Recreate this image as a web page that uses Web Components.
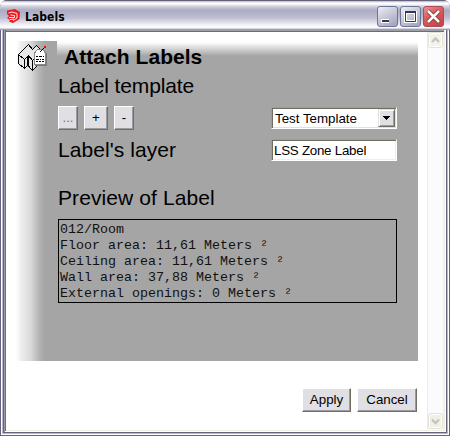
<!DOCTYPE html>
<html lang="en"><head><meta charset="utf-8"><title>Labels</title>
<style>html,body{margin:0;background:#fff}body{width:450px;height:436px;overflow:hidden;font-family:"Liberation Sans",Arial,sans-serif;color:#000}</style></head>
<body>
<label-window></label-window>
<script>
const define=(name,html)=>customElements.define(name,class extends HTMLElement{
  constructor(){super();const t=document.createElement('template');t.innerHTML=html;this.attachShadow({mode:'open'}).append(t.content.cloneNode(true));}
});

define('push-button',`<style>
:host{display:flex;box-sizing:border-box;height:24px;align-items:center;justify-content:center;background:#e0dfe3;border:1px solid;border-color:#fff #716f64 #716f64 #fff;box-shadow:inset -1px -1px #9d9da1;font-size:13.33px;line-height:15px;padding-bottom:1px;white-space:pre}
</style><slot></slot>`);

define('section-title',`<style>:host{display:block;font-size:21px;line-height:24px;letter-spacing:var(--track,-.12px);white-space:nowrap}</style><slot></slot>`);

define('text-field',`<style>
:host{display:flex;box-sizing:border-box;width:126px;height:22px;background:#fff;border:1px solid;border-color:#9d9da1 #fff #fff #9d9da1;box-shadow:inset 1px 1px #716f64,inset -1px -1px #f1efe2;font-size:13.33px;letter-spacing:-.25px;line-height:22px;padding-left:2px;white-space:nowrap}
</style><slot></slot>`);

define('drop-down',`<style>
:host{display:flex;box-sizing:border-box;width:126px;height:22px;background:#fff;border:1px solid;border-color:#9d9da1 #fff #fff #9d9da1;box-shadow:inset 1px 1px #716f64,inset -1px -1px #e0dfe3;font-size:13.33px;line-height:20px;padding:1px 1px 1px 3px;justify-content:space-between}
span{white-space:nowrap}
i{box-sizing:border-box;width:17px;height:18px;background:#e0dfe3;border:1px solid;border-color:#e0dfe3 #716f64 #716f64 #e0dfe3;box-shadow:inset 1px 1px #fff,inset -1px -1px #9d9da1;display:flex;align-items:center;justify-content:center}
</style><span><slot></slot></span><i><svg width="7" height="4" shape-rendering="crispEdges"><path d="M0 0H7V1H6V2H5V3H4V4H3V3H2V2H1V1H0Z"/></svg></i>`);

define('title-button',`<style>
:host{display:block;width:21px;height:21px}svg{display:block}
.min,.max,.close{display:none}
:host([kind=min]) .min,:host([kind=max]) .max,:host([kind=close]) .close{display:block}
</style><svg width="21" height="21" viewBox="0 0 21 21"><defs>
<linearGradient id="g" x2=".6" y2="1"><stop stop-color="#f0f0f7"/><stop offset=".5" stop-color="#ccccdc"/><stop offset="1" stop-color="#a9a9c3"/></linearGradient>
<linearGradient id="r" x2=".6" y2="1"><stop stop-color="#e99a9a"/><stop offset=".45" stop-color="#d9605f"/><stop offset="1" stop-color="#ca4549"/></linearGradient></defs>
<g class="min"><rect x=".5" y=".5" width="20" height="20" rx="2.5" fill="url(#g)" stroke="#6d7798"/><path d="M4 13h8v4H4z" fill="#fff"/><path d="M5 14h7v2H5z" fill="#39364f"/></g>
<g class="max"><rect x=".5" y=".5" width="20" height="20" rx="2.5" fill="url(#g)" stroke="#6d7798"/><rect x="5.5" y="6.5" width="10" height="9" fill="none" stroke="#fff" stroke-width="3"/><path d="M5 6.5h11M5.5 6v9.5h10V6M5 5.5h11" fill="none" stroke="#39364f"/></g>
<g class="close"><rect x=".5" y=".5" width="20" height="20" rx="2.5" fill="url(#r)" stroke="#a94c61"/><path d="M5 5l11 11M16 5L5 16" stroke="#772c35" stroke-width="4"/><path d="M5 5l11 11M16 5L5 16" stroke="#fff" stroke-width="2.6"/></g></svg>`);

define('title-bar',`<style>
:host{display:flex;box-sizing:border-box;height:30px;padding:6px 6px 0 7px;background:linear-gradient(#65637e 0 1px,#b4b4ca 1px,#fff 3px,#fff 4px,#d5d5e1 6px,#adadc5 10px,#afafc6 12px,#c0c0d2 18px,#e4e4ed 23px,#fff 27px,#f5f5fa 28px,#b5b5ca 29px,#8c8ba3 30px)}
.logo{margin-top:3px;flex:none}b{font:bold 12px/23px "DejaVu Sans Condensed","DejaVu Sans",sans-serif;margin-left:5px;flex:1;letter-spacing:.05px}
nav{display:flex;gap:2px}
</style><svg class="logo" width="13" height="15" viewBox="0 0 13 15"><path d="M0 1.5L8 0L13 3L12.5 10L6 14L2 12.5L3 11L0 9L2 7L0 5Z" fill="#ea1c20"/><path d="M1.5 4L5 3L10 4.5V9L6 11.5M3.5 6L7.5 6.5V8.5L2 8.5M3 10.5L7 10" fill="none" stroke="#fff" stroke-width=".9"/></svg><b>Labels</b>
<nav><title-button kind="min"></title-button><title-button kind="max"></title-button><title-button kind="close"></title-button></nav>`);

define('scroll-bar',`<style>
:host{display:flex;box-sizing:border-box;flex-direction:column;justify-content:space-between;width:17px;background:#fbfbfd;border-left:1px solid #eeede5;border-right:1px solid #f3efe1}
svg{display:block}
</style>
<svg width="15" height="17"><rect x=".5" y=".5" width="14" height="15" rx="2" fill="#f3f2ed" stroke="#e4e2d4"/><rect x="1.5" y="1.5" width="12" height="13" rx="1" fill="none" stroke="#fff"/><path d="M4 10l3.5-3.5L11 10" fill="none" stroke="#c5c6bb" stroke-width="2.4"/></svg>
<svg width="15" height="17"><rect x=".5" y=".5" width="14" height="15" rx="2" fill="#f0efea" stroke="#e4e2d4"/><rect x="1.5" y="1.5" width="12" height="13" rx="1" fill="none" stroke="#fff"/><path d="M4 6.5L7.5 10L11 6.5" fill="none" stroke="#c5c6bb" stroke-width="2.4"/></svg>`);

define('label-icon',`<style>:host{display:block;width:31px;height:31px}svg{display:block}</style>
<svg width="31" height="31" viewBox="0 0 31 31" shape-rendering="crispEdges"><path d="M1.5 13.5L11.5 3.5L15.5 8.5L19.5 4.5L24.5 9.5V22.5L20 25L15.5 29.5L10.5 24.5L7.5 27.5L1.5 22.5Z" fill="#e8e8e8"/>
<path d="M1.5 13.5L11.5 3.5L15.5 8.5L19.5 4.5L23.5 8.5M1.5 13V22.5L7.5 27.5V18.5L1.5 13.5M7.5 18.5L11.5 14.5L15.5 19.5L19.5 15.5M7.5 27.5L10.5 24.5V15.5M11.5 15V25L15.5 29.5V19.5M15.5 29.5L19.5 25.5" fill="none" stroke="#000"/>
<path d="M18 13L21 9H27L30 13V25H18Z" fill="#777"/><path d="M17.5 12L20.5 8.5H25.5L28.5 12V23.5H17.5Z" fill="#fff" stroke="#888"/>
<path d="M19 15.5h2m1 0h3m1 0h1M19 18.5h3m1 0h1m1 0h2M19 20.5h2m1 0h2m1 0h2M22.5 11.5L27.5 6.5" stroke="#000" fill="none"/><path d="M27 5h2v2h-2z" fill="red"/></svg>`);

define('label-preview',`<style>:host{display:block;box-sizing:border-box;width:339px;height:84px;border:1px solid #000;padding:2px 1px}pre{margin:0;font:13.33px/16px "Liberation Mono","Courier New",monospace;color:#111}</style><pre><slot></slot></pre>`);

define('label-panel',`<style>
:host{display:grid;grid-template-columns:41px 1fr;box-sizing:border-box;width:402px;height:320px;background:linear-gradient(90deg,#fff,#eee 5px,#d8d8d8 15px,#b4b4b4 23px,#a5a5a5 29px)}
.side{padding:0 0 0 1px}
main{padding:3px 21px 0 1px;background:linear-gradient(#fff,#fafafa 2px,#a5a5a5 15px)}
h1{font-size:21px;line-height:25px;margin:0 0 0 6px;letter-spacing:.05px;white-space:nowrap}
.row{display:flex;justify-content:space-between;align-items:flex-start}
.buttons{display:flex;gap:6px}.b{width:20px}.p{width:24px}
</style>
<div class="side"><label-icon></label-icon></div>
<main><h1>Attach Labels</h1><section-title style="margin-top:5px">Label template</section-title>
<div class="row" style="margin-top:8px"><div class="buttons"><push-button class="b" style="color:#777">...</push-button><push-button class="p">+</push-button><push-button class="b">-</push-button></div><drop-down style="margin-top:1px">Test Template</drop-down></div>
<div class="row" style="margin-top:8px"><section-title style="--track:.06px">Label's layer</section-title><text-field style="margin-top:1px">LSS Zone Label</text-field></div>
<section-title style="margin-top:24px;--track:.1px">Preview of Label</section-title>
<label-preview style="margin-top:9px">012/Room
Floor area: 11,61 Meters ²
Ceiling area: 11,61 Meters ²
Wall area: 37,88 Meters ²
External openings: 0 Meters ²</label-preview></main>`);

define('label-window',`<style>
:host{display:grid;grid-template-rows:30px 1fr;box-sizing:border-box;width:450px;height:436px;border-radius:7px 7px 0 0;overflow:hidden;background:#65637e}
.frame{padding:0 6px 6px;background:#fff;border:0;box-shadow:inset 1px 0 #65637e,inset -1px 0 #65637e,inset 0 -1px #65637e,inset 2px 0 #fff,inset -2px 0 #fff,inset 0 -2px #fff,inset 3px 0 #b9b8ce,inset -3px 0 #b9b8ce,inset 0 -3px #b9b8ce,inset 4px 0 #65637e,inset -4px 0 #65637e,inset 0 -4px #65637e,inset 5px 0 #9d9da1,inset -5px 0 #fff,inset 0 -5px #fff,inset 6px 0 #716f64,inset -6px 0 #f1efe2,inset 0 -6px #f1efe2,inset 0 1px #9d9da1,inset 0 2px #716f64}
.view{display:flex;height:398px;margin-top:2px;justify-content:space-between}
.page{padding:9px 0 0 10px}
.actions{display:flex;gap:6px;justify-content:flex-end;padding:27px 1px 0 0}
</style><title-bar></title-bar><div class="frame"><div class="view"><div class="page"><label-panel></label-panel><div class="actions"><push-button style="width:49px">Apply</push-button><push-button style="width:60px">Cancel</push-button></div></div><scroll-bar></scroll-bar></div></div>`);
</script></body></html>
